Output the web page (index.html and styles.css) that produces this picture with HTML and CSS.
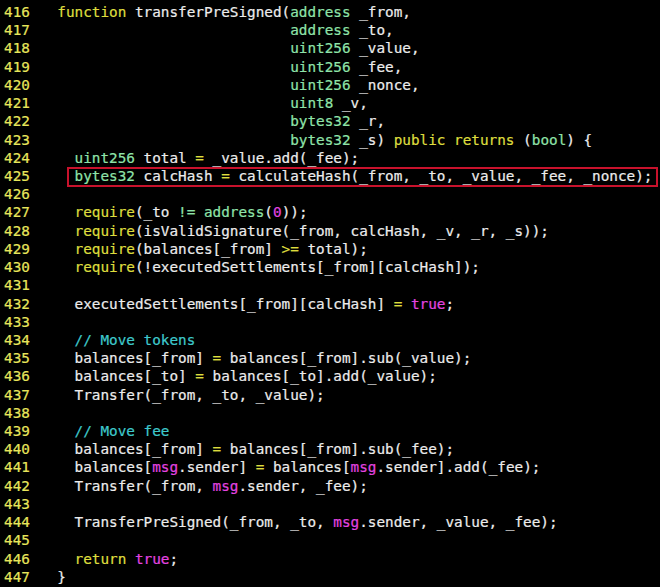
FILE: index.html
```html
<!DOCTYPE html>
<html>
<head>
<meta charset="utf-8">
<link rel="stylesheet" href="styles.css">
</head>
<body>
<div class="editor">
<div class="line"><span class="ln">416</span><span class="code">  <span class="k">function</span> transferPreSigned(<span class="t">address</span> _from,</span></div>
<div class="line"><span class="ln">417</span><span class="code">                             <span class="t">address</span> _to,</span></div>
<div class="line"><span class="ln">418</span><span class="code">                             <span class="t">uint256</span> _value,</span></div>
<div class="line"><span class="ln">419</span><span class="code">                             <span class="t">uint256</span> _fee,</span></div>
<div class="line"><span class="ln">420</span><span class="code">                             <span class="t">uint256</span> _nonce,</span></div>
<div class="line"><span class="ln">421</span><span class="code">                             <span class="t">uint8</span> _v,</span></div>
<div class="line"><span class="ln">422</span><span class="code">                             <span class="t">bytes32</span> _r,</span></div>
<div class="line"><span class="ln">423</span><span class="code">                             <span class="t">bytes32</span> _s) <span class="k">public returns</span> (<span class="t">bool</span>) {</span></div>
<div class="line"><span class="ln">424</span><span class="code">    <span class="t">uint256</span> total <span class="k">=</span> _value.add(_fee);</span></div>
<div class="line"><span class="ln">425</span><span class="code">    <span class="hl"><span class="t">bytes32</span> calcHash <span class="k">=</span> calculateHash(_from, _to, _value, _fee, _nonce);</span></span></div>
<div class="line"><span class="ln">426</span><span class="code"></span></div>
<div class="line"><span class="ln">427</span><span class="code">    <span class="k">require</span>(_to <span class="t">!=</span> <span class="t">address</span>(<span class="m">0</span>));</span></div>
<div class="line"><span class="ln">428</span><span class="code">    <span class="k">require</span>(isValidSignature(_from, calcHash, _v, _r, _s));</span></div>
<div class="line"><span class="ln">429</span><span class="code">    <span class="k">require</span>(balances[_from] <span class="k">&gt;=</span> total);</span></div>
<div class="line"><span class="ln">430</span><span class="code">    <span class="k">require</span>(!executedSettlements[_from][calcHash]);</span></div>
<div class="line"><span class="ln">431</span><span class="code"></span></div>
<div class="line"><span class="ln">432</span><span class="code">    executedSettlements[_from][calcHash] <span class="k">=</span> <span class="m">true</span>;</span></div>
<div class="line"><span class="ln">433</span><span class="code"></span></div>
<div class="line"><span class="ln">434</span><span class="code">    <span class="c">// Move tokens</span></span></div>
<div class="line"><span class="ln">435</span><span class="code">    balances[_from] <span class="k">=</span> balances[_from].sub(_value);</span></div>
<div class="line"><span class="ln">436</span><span class="code">    balances[_to] <span class="k">=</span> balances[_to].add(_value);</span></div>
<div class="line"><span class="ln">437</span><span class="code">    Transfer(_from, _to, _value);</span></div>
<div class="line"><span class="ln">438</span><span class="code"></span></div>
<div class="line"><span class="ln">439</span><span class="code">    <span class="c">// Move fee</span></span></div>
<div class="line"><span class="ln">440</span><span class="code">    balances[_from] <span class="k">=</span> balances[_from].sub(_fee);</span></div>
<div class="line"><span class="ln">441</span><span class="code">    balances[<span class="m">msg</span>.sender] <span class="k">=</span> balances[<span class="m">msg</span>.sender].add(_fee);</span></div>
<div class="line"><span class="ln">442</span><span class="code">    Transfer(_from, <span class="m">msg</span>.sender, _fee);</span></div>
<div class="line"><span class="ln">443</span><span class="code"></span></div>
<div class="line"><span class="ln">444</span><span class="code">    TransferPreSigned(_from, _to, <span class="m">msg</span>.sender, _value, _fee);</span></div>
<div class="line"><span class="ln">445</span><span class="code"></span></div>
<div class="line"><span class="ln">446</span><span class="code">    <span class="k">return</span> <span class="m">true</span>;</span></div>
<div class="line"><span class="ln">447</span><span class="code">  }</span></div>
</div>
</body>
</html>
```
FILE: styles.css
```css
html, body {
  margin: 0;
  padding: 0;
  background: #000;
}
.editor {
  width: 660px;
  height: 587px;
  overflow: hidden;
  padding-top: 3px;
  box-sizing: border-box;
  font-family: "DejaVu Sans Mono", "Liberation Mono", monospace;
  font-size: 14.33px;
  line-height: 18.23px;
  color: #ececec;
  -webkit-text-stroke: 0.2px;
}
.line {
  display: flex;
  height: 18.23px;
}
.ln {
  width: 36px;
  padding-left: 4px;
  flex: none;
  color: #e8e65c;
}
.code {
  white-space: pre;
}
.k { color: #dedd3e; }
.t { color: #8fe3a9; }
.m { color: #e444e0; }
.c { color: #3ec9cc; }
.hl {
  position: relative;
}
.hl::after {
  content: "";
  position: absolute;
  left: -8px;
  right: -5px;
  top: -1px;
  bottom: -3px;
  border: 2px solid #c8122c;
  -webkit-text-stroke: 0;
}
```
